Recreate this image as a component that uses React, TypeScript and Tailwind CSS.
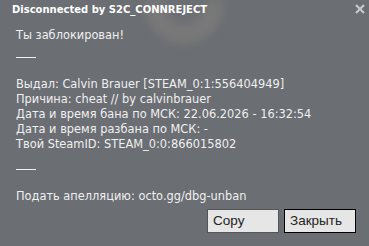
import React from "react";

export default function App() {
  const body = "font-['DejaVu_Sans',sans-serif] text-[11.4px] leading-[15px] text-[#f0f0f0]";
  return (
    <div className="relative w-[369px] h-[246px] overflow-hidden bg-[#6b6e73]">
      <svg className="absolute left-0 top-0" width="369" height="246" style={{ filter: "blur(5px)" }}>
        <circle cx="184" cy="4" r="30" fill="none" stroke="#7d7c7b" strokeWidth="20" opacity="0.75" />
      </svg>
      <div className="relative flex flex-col h-full">
        <div className="flex items-center justify-between h-[18px] pl-[12px] pr-[4px]">
          <span className="font-['DejaVu_Sans',sans-serif] font-bold text-[10px] text-white">Disconnected by S2C_CONNREJECT</span>
          <svg width="10" height="10" viewBox="0 0 10 10">
            <path d="M1 1 L9 9 M9 1 L1 9" stroke="#c8c8c8" strokeWidth="2.2" />
          </svg>
        </div>
        <div className={`${body} pl-[16px] pt-[10px]`}>
          <div>Ты заблокирован!</div>
          <div className="h-[1px] w-[20px] bg-[#f0f0f0] mt-[14px] mb-[19px]" />
          <div>Выдал: Calvin Brauer [STEAM_0:1:556404949]</div>
          <div>Причина: cheat // by calvinbrauer</div>
          <div>Дата и время бана по МСК: 22.06.2026 - 16:32:54</div>
          <div>Дата и время разбана по МСК: -</div>
          <div>Твой SteamID: STEAM_0:0:866015802</div>
          <div className="h-[1px] w-[20px] bg-[#f0f0f0] mt-[17px] mb-[19px]" />
          <div>Подать апелляцию: octo.gg/dbg-unban</div>
        </div>
        <div className="flex justify-end gap-[5px] pr-[13px] mt-[5px]">
          <button className="w-[72px] h-[24px] bg-[#e6e6e6] border border-[#555] text-left pl-[5px] font-['Liberation_Sans',sans-serif] text-[13.5px] leading-[22px] text-[#222]">Copy</button>
          <button className="w-[72px] h-[24px] bg-[#e6e6e6] border border-black text-left pl-[5px] font-['Liberation_Sans',sans-serif] text-[13.5px] leading-[22px] text-[#222]">Закрыть</button>
        </div>
      </div>
    </div>
  );
}
